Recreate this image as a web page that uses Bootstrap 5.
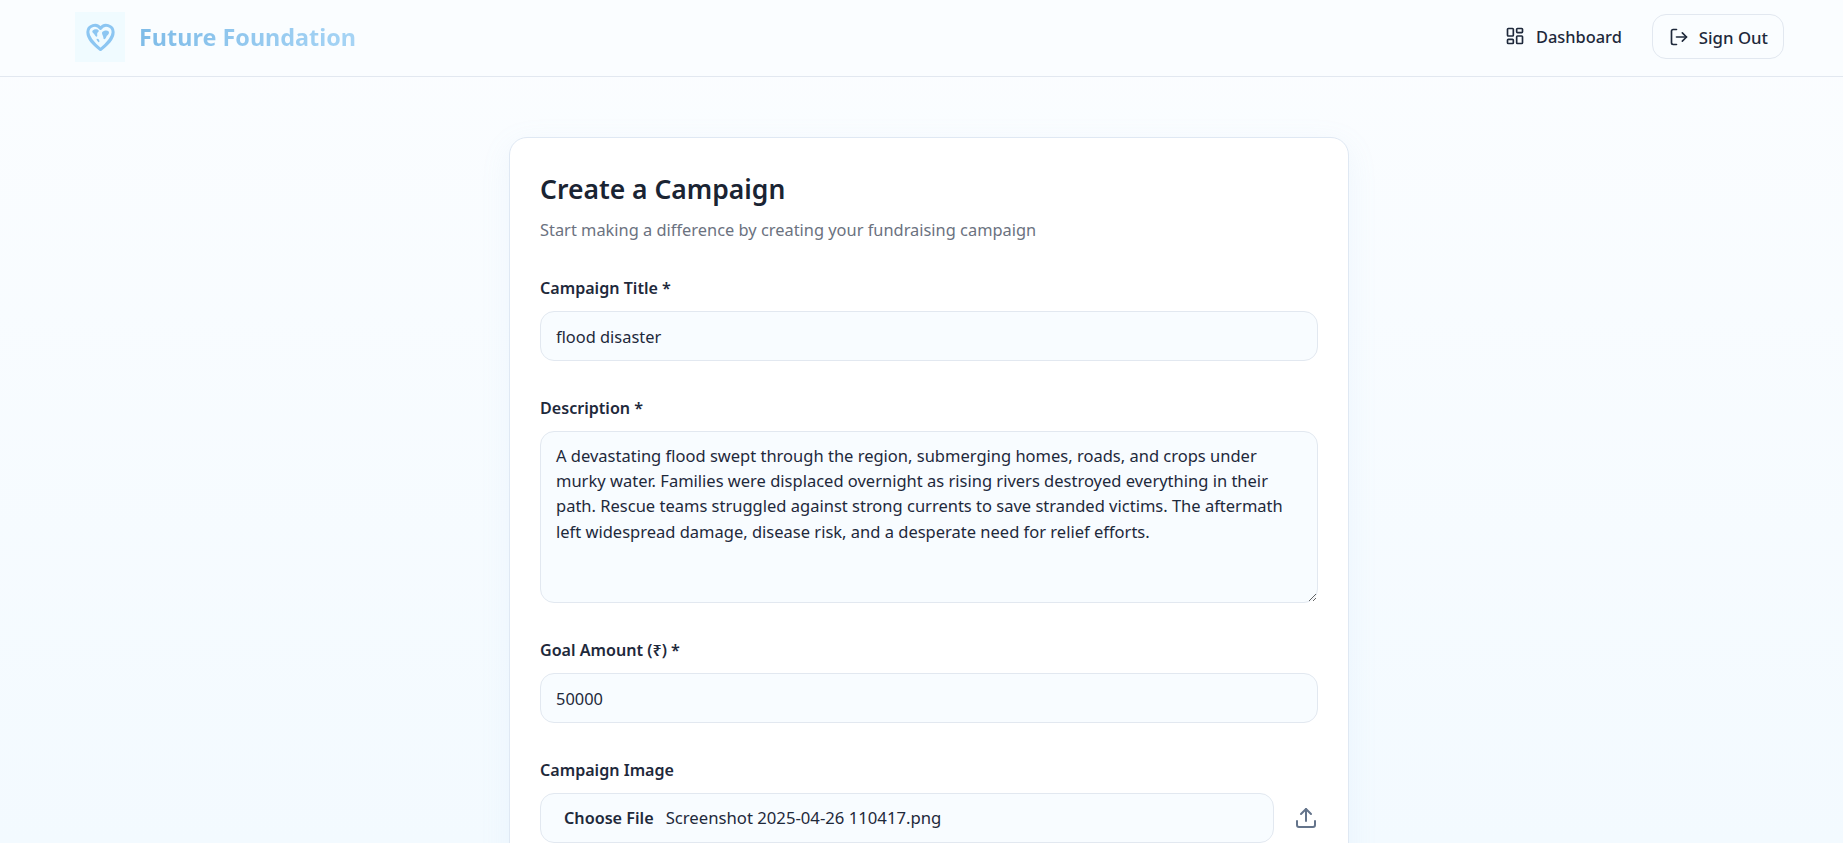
<!DOCTYPE html>
<html lang="en">
<head>
    <meta charset="UTF-8">
    <meta name="viewport" content="width=device-width, initial-scale=1.0">
    <title>Create a Campaign</title>
    <link href="https://cdn.jsdelivr.net/npm/bootstrap@5.3.0/dist/css/bootstrap.min.css" rel="stylesheet">
    <style>
        html, body { height: 100%; }
        body { background: linear-gradient(180deg, #fbfdff 0%, #f3faff 100%); background-attachment: fixed; font-family: "Noto Sans", "Open Sans", sans-serif; color: #1e293b; overflow: hidden; }
        .top-bar { height: 77px; padding: 0 59px 3px 75px; background: #fafdff; border-bottom: 1px solid #e2e8f0; }
        .logo-box { width: 50px; height: 50px; background: #f0fbff; }
        .logo-text { font-size: 23.4px; font-weight: 700; margin: 2px 0 0 14px; background: linear-gradient(90deg, #7fbce8, #a6d4f5); -webkit-background-clip: text; background-clip: text; color: transparent; }
        .dash-link { color: #1e293b; font-size: 16.4px; font-weight: 500; text-decoration: none; margin-right: 30px; gap: 11px; }
        .nav-label { padding-top: 2px; }
        .out-btn { height: 45px; padding: 0 15px 0 16px; gap: 10px; border: 1px solid #e2e8f0; border-radius: 14px; font-size: 16.8px; font-weight: 500; color: #1e293b; background: transparent; }
        .page-wrap { padding-left: 15px; }
        .form-panel { width: 840px; margin: 60px auto 0; padding: 30px; background: #fff; border: 1px solid #dfe8f3; border-radius: 18px; box-shadow: 0 8px 30px rgba(148, 184, 230, .1); }
        .panel-title { font-size: 26.5px; font-weight: 600; color: #1a2433; line-height: 36px; margin: 3px 0 11px; }
        .panel-sub { font-size: 16.4px; color: #6b7280; line-height: 24px; margin-bottom: 34px; }
        .field { margin-bottom: 35px; }
        .field-label { display: block; font-size: 16.1px; font-weight: 600; color: #1e293b; line-height: 24px; margin-bottom: 11px; }
        .field-input.form-control { height: 50px; padding: 0 15px; font-size: 16.4px; color: #1e293b; background: #f8fcff; border: 1px solid #e2e8f0; border-radius: 14px; box-shadow: none; }
        textarea.field-input.form-control { height: 172px; padding: 11px 15px; font-size: 16.5px; line-height: 25.2px; resize: vertical; }
        .file-row { gap: 20px; }
        .file-box { height: 50px; flex: 1; padding: 0 23px; background: #f8fcff; border: 1px solid #e2e8f0; border-radius: 14px; font-size: 16.7px; }
        .file-btn { font-size: 16.2px; font-weight: 600; margin-right: 12px; }
        .upload-icon { color: #64748b; flex: none; }
    </style>
</head>
<body>

<nav class="top-bar d-flex align-items-center justify-content-between">
    <a class="d-flex align-items-center text-decoration-none" href="#">
        <span class="logo-box d-flex align-items-center justify-content-center">
            <svg width="33" height="33" viewBox="0 0 24 24" fill="none" stroke="#8cc6f2" stroke-width="2.2" stroke-linejoin="round">
                <path d="M12 21.500C7 17.500 2.800 13.700 2.800 8.800a5 5 0 0 1 9.200-2.600 5 5 0 0 1 9.200 2.600c0 4.900-4.200 8.700-9.200 12.700z"/>
                <path fill="#8cc6f2" stroke="none" d="M6.300 7.600c1.300-1.200 3.800-1.100 4.400.1.400 1-.9 1.200-1.100 2.100-.2 1.100.5 2.200-.4 2.300-1 .1-1.200-1.600-2.200-2.300-.9-.6-1.300-1.500-.7-2.200zM13.200 8.900c.9-1.300 3.700-1.700 4.600-.7.800.8.300 2.300-.7 2.800-.8.400-.9 1.600-1.500 2.400-.7.900-1.600.6-1.500-.5.100-.9-1.400-3-.9-4zM9.300 13.700c.7-.2 1.800.4 1.900 1.500.1.900-.6 1.400-1 .7-.4-.6-1.500-1.700-.9-2.200z"/>
            </svg>
        </span>
        <span class="logo-text">Future Foundation</span>
    </a>
    <div class="d-flex align-items-center">
        <a class="dash-link d-flex align-items-center" href="#">
            <svg width="20" height="20" viewBox="0 0 24 24" fill="none" stroke="#1e293b" stroke-width="2" stroke-linejoin="round">
                <rect x="3" y="3" width="7" height="9" rx="1"/>
                <rect x="14" y="3" width="7" height="5" rx="1"/>
                <rect x="14" y="12" width="7" height="9" rx="1"/>
                <rect x="3" y="16" width="7" height="5" rx="1"/>
            </svg>
            <span class="nav-label">Dashboard</span>
        </a>
        <button class="out-btn d-flex align-items-center" type="button">
            <svg width="20" height="20" viewBox="0 0 24 24" fill="none" stroke="#1e293b" stroke-width="2" stroke-linecap="round" stroke-linejoin="round">
                <path d="M9 21H5a2 2 0 0 1-2-2V5a2 2 0 0 1 2-2h4"/>
                <path d="M16 17l5-5-5-5"/>
                <path d="M21 12H9"/>
            </svg>
            <span class="nav-label">Sign Out</span>
        </button>
    </div>
</nav>

<div class="page-wrap">
<main class="form-panel">
    <h1 class="panel-title">Create a Campaign</h1>
    <p class="panel-sub">Start making a difference by creating your fundraising campaign</p>

    <div class="field">
        <label class="field-label" for="title">Campaign Title *</label>
        <input class="form-control field-input" id="title" type="text" value="flood disaster">
    </div>

    <div class="field">
        <label class="field-label" for="desc">Description *</label>
        <textarea class="form-control field-input" id="desc">A devastating flood swept through the region, submerging homes, roads, and crops under murky water. Families were displaced overnight as rising rivers destroyed everything in their path. Rescue teams struggled against strong currents to save stranded victims. The aftermath left widespread damage, disease risk, and a desperate need for relief efforts.</textarea>
    </div>

    <div class="field">
        <label class="field-label" for="goal">Goal Amount (₹) *</label>
        <input class="form-control field-input" id="goal" type="text" value="50000">
    </div>

    <div class="field">
        <span class="field-label">Campaign Image</span>
        <div class="file-row d-flex align-items-center">
            <div class="file-box d-flex align-items-center">
                <span class="file-btn">Choose File</span>
                <span>Screenshot 2025-04-26 110417.png</span>
            </div>
            <svg class="upload-icon" width="24" height="24" viewBox="0 0 24 24" fill="none" stroke="currentColor" stroke-width="2" stroke-linecap="round" stroke-linejoin="round">
                <path d="M21 15v4a2 2 0 0 1-2 2H5a2 2 0 0 1-2-2v-4"/>
                <path d="M17 8l-5-5-5 5"/>
                <path d="M12 3v12"/>
            </svg>
        </div>
    </div>
</main>
</div>

<script src="https://cdn.jsdelivr.net/npm/bootstrap@5.3.0/dist/js/bootstrap.bundle.min.js"></script>
</body>
</html>
